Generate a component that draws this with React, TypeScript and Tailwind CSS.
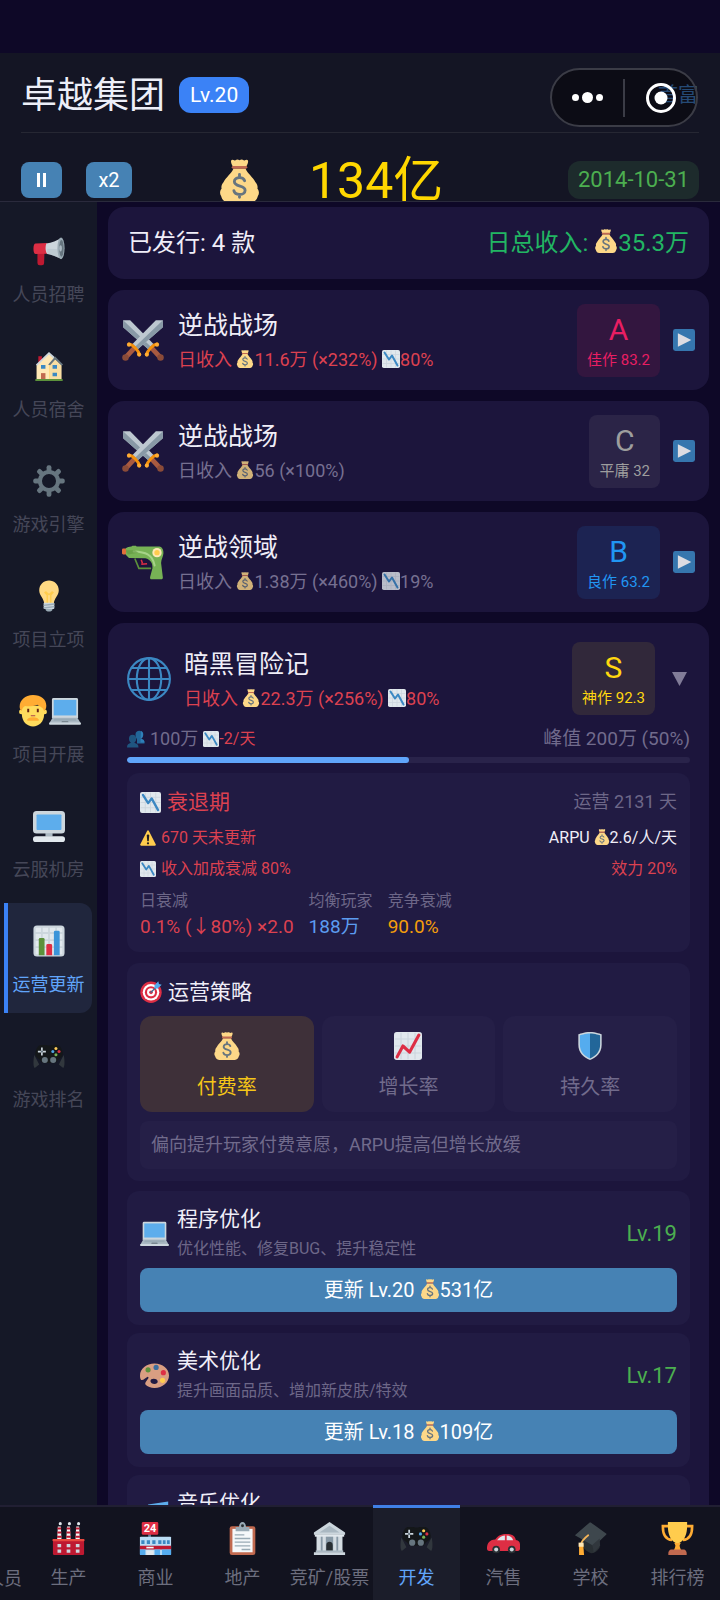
import React from "react";
import clsx from "clsx";

interface IconProps {
  className?: string;
}

interface SvgProps extends IconProps {
  children: React.ReactNode;
}

function Svg({ className, children }: SvgProps) {
  return (
    <svg viewBox="0 0 36 36" aria-hidden="true" className={clsx("shrink-0", className)}>
      {children}
    </svg>
  );
}

function MoneyBag({ className }: IconProps) {
  return (
    <Svg className={className}>
      <path fill="#FDD888" d="M11 1.200c1.200-1.400 2.400.5 3.600-.2 1.100-.8 2.200-.8 3.400 0 1.200-.8 2.400-.8 3.500 0 1.200.7 2.400-1.200 3.600.2.5 1.800-.9 3.800-1.800 5.800H12.800C11.900 5 10.500 3 11 1.200z" />
      <path fill="#FDD888" d="M13 8h10c2 4.500 6 7 8.400 11.500 1.600 2 2 3.500 1.600 5.500 1.500 1.500 1.700 4.500.4 6C32.600 34 31 36 28 36H8c-3 0-4.600-2-5.400-5-1.300-1.500-1.100-4.500.4-6-.4-2 0-3.500 1.600-5.500C7 15 11 12.500 13 8z" />
      <rect x="11.5" y="5.8" width="13" height="2.4" rx="1.2" fill="#BF6952" />
      <path fill="none" stroke="#67757F" strokeWidth="2.4" strokeLinecap="round" d="M22.300 18.200c-.6-1.700-2.200-2.600-4.200-2.600-2.500 0-4.400 1.200-4.400 3.300 0 5 9 2.700 9 7.200 0 2.300-2.100 3.600-4.600 3.600-2.400 0-4.300-1.100-4.800-3.200M18 13v2.500M18 30v2" />
    </Svg>
  );
}

function ChartGrid() {
  return (
    <>
      <rect width="36" height="36" rx="3.5" fill="#E1E8ED" />
      <path stroke="#CCD6DD" strokeWidth="1.5" d="M1 9h34M1 18h34M1 27h34M9 1v34M18 1v34M27 1v34" />
    </>
  );
}

function ChartDown({ className }: IconProps) {
  return (
    <Svg className={className}>
      <ChartGrid />
      <path fill="none" stroke="#3B88C3" strokeWidth="4" strokeLinecap="round" strokeLinejoin="round" d="M5 5l9 14 6-8 11 20" />
    </Svg>
  );
}

function ChartUp({ className }: IconProps) {
  return (
    <Svg className={className}>
      <ChartGrid />
      <path fill="none" stroke="#DD2E44" strokeWidth="4" strokeLinecap="round" strokeLinejoin="round" d="M4 32l7.500-14 8.500 8L32 4" />
    </Svg>
  );
}

function BarChart({ className }: IconProps) {
  return (
    <Svg className={className}>
      <rect x=".5" y=".5" width="35" height="35" rx="4" fill="#CCD6DD" />
      <path fill="#E1E8ED" d="M3 3h6v5H3zM11 3h6v5h-6zM19 3h6v5h-6zM27 3h6v5h-6zM3 10h6v6H3zM11 10h6v6h-6zM19 10h6v6h-6zM27 10h6v6h-6zM3 18h6v6H3zM11 18h6v6h-6zM19 18h6v6h-6zM27 18h6v6h-6zM3 26h6v7H3zM11 26h6v7h-6zM19 26h6v7h-6zM27 26h6v7h-6z" />
      <path fill="#5C913B" d="M6.500 34V16a1.500 1.500 0 0 1 1.500-1.500h3.500A1.500 1.500 0 0 1 13 16v18z" />
      <path fill="#DD2E44" d="M15 34V23a1.500 1.500 0 0 1 1.500-1.500H20a1.500 1.500 0 0 1 1.500 1.500v11z" />
      <path fill="#3B94D9" d="M23.500 34V8A1.500 1.500 0 0 1 25 6.500h3.500A1.500 1.500 0 0 1 30 8v26z" />
    </Svg>
  );
}

function Megaphone({ className }: IconProps) {
  return (
    <Svg className={className}>
      <path fill="#BE1931" d="M5 16h8l-.5 15.500A2.500 2.500 0 0 1 10 34H7.500A2.500 2.500 0 0 1 5 31.500z" />
      <path fill="#DD2E44" d="M3 9.500L16 9v12L3 21.500c-1.500 0-2.500-2-2.500-6s1-6 2.500-6z" />
      <path fill="#CCD6DD" d="M15 9.500C21 9 27 6 32 3v24c-5-2-11-5-16-5.500-2-3-2.500-8-1-12z" />
      <path fill="#AAB8C2" d="M16 15.500l16 .5v11c-5-2-11-5-16-5.500z" opacity=".4" />
      <ellipse cx="31.5" cy="15" rx="4" ry="12.3" fill="#9AAAB4" />
      <ellipse cx="32" cy="15" rx="2.5" ry="9.5" fill="#66757F" />
      <ellipse cx="31" cy="15" rx="1.5" ry="3.5" fill="#AAB8C2" />
    </Svg>
  );
}

function House({ className }: IconProps) {
  return (
    <Svg className={className}>
      <rect x="6" y="7" width="4" height="8" fill="#BE1931" />
      <path fill="#FFE8B6" d="M4 17L18 4l14 13v16H4z" />
      <path fill="#F3D48F" d="M18 17l6-8 8 8v16H18z" opacity=".5" />
      <path fill="none" stroke="#CCD6DD" strokeWidth="2" d="M4 17L18 3.500 24 9" />
      <path fill="none" stroke="#66757F" strokeWidth="2.2" d="M18 17l7-8 8 8" />
      <path fill="#FFD983" d="M18 17h1v16h-1z" />
      <path fill="#3B88C3" d="M9 17h5v4H9zM22 17h5v4h-5zM22 25.500h5v4h-5z" />
      <path fill="#C1694F" d="M9 26h5v7H9z" />
      <rect x="2.5" y="32.5" width="31" height="2.5" rx="1" fill="#5C913B" />
    </Svg>
  );
}

function Gear({ className }: IconProps) {
  return (
    <Svg className={className}>
      <g fill="#66757F">
        {[0, 45, 90, 135, 180, 225, 270, 315].map((angle) => (
          <rect key={angle} x="15.3" y=".3" width="5.4" height="8" rx="2.2" transform={`rotate(${angle} 18 18)`} />
        ))}
      </g>
      <circle cx="18" cy="18" r="10.2" fill="none" stroke="#66757F" strokeWidth="4.6" />
    </Svg>
  );
}

function Bulb({ className }: IconProps) {
  return (
    <Svg className={className}>
      <path fill="#FFD983" d="M29 11.500C29 5 24 .5 18 .5S7 5 7 11.500c0 6 5.500 9.500 5.500 15h11c0-5.500 5.500-9 5.500-15z" />
      <path fill="none" stroke="#FFCC4D" strokeWidth="1.6" d="M16 26V17l-3-3.500M20 26V17l3-3.500M14 13l4 3.500 4-3.500" />
      <rect x="12" y="25.5" width="12" height="7" rx="1" fill="#CCD6DD" />
      <path stroke="#99AAB5" strokeWidth="1.5" d="M12 28.500l12-1.500M12 31.500l12-1.500" />
      <path fill="#99AAB5" d="M14 32.500h8c0 2-2 3-4 3s-4-1-4-3z" />
    </Svg>
  );
}

function Man({ className }: IconProps) {
  return (
    <Svg className={className}>
      <circle cx="5" cy="19" r="2.7" fill="#FFDC5D" />
      <circle cx="31" cy="19" r="2.7" fill="#FFDC5D" />
      <path fill="#FFDC5D" d="M5.500 12h25v10c0 8-6 13.500-12.500 13.500S5.500 30 5.500 22z" />
      <path fill="#FFAC33" d="M18 0C9 0 3 6 3 13c0 2 .5 4 2 5 1-2 1.500-4 4-5.500 5 .5 10 0 14-1.500 1 2 6 2 7.500 7C32 17 33 15 33 12 33 5 27 0 18 0z" />
      <path fill="#662113" d="M11.500 15.500h2.200v3.800h-2.200zM22.300 15.500h2.200v3.800h-2.200z" />
      <path fill="#C1694F" d="M15.500 22.500h5v1.500h-5z" />
      <path fill="#FFAC33" d="M18 25c4 0 6 1 7 3.500-2 .8-4 .5-7 .5s-5 .3-7-.5C12 26 14 25 18 25z" />
    </Svg>
  );
}

function Laptop({ className }: IconProps) {
  return (
    <Svg className={className}>
      <path fill="#CCD6DD" d="M5 3.500h26A1.700 1.700 0 0 1 32.700 5v21H3.300V5A1.700 1.700 0 0 1 5 3.500z" />
      <path fill="#5DADEC" d="M5.300 5.500h25.400V23H5.300z" />
      <path fill="#AAB8C2" d="M4 25.500h28l3.500 6H.5z" />
      <path fill="#99AAB5" d="M6 26.500h24l1 2.500H5z" />
      <path fill="#78868F" d="M14.500 29.300h7l.5 1.700h-8z" />
      <rect x="0" y="31" width="36" height="2.5" rx="1.2" fill="#CCD6DD" />
    </Svg>
  );
}

function Desktop({ className }: IconProps) {
  return (
    <Svg className={className}>
      <path fill="#AAB8C2" d="M14 26h8v4h-8z" />
      <rect x="0" y="1" width="36" height="25.5" rx="4" fill="#CCD6DD" />
      <rect x="4" y="5" width="28" height="17.5" rx="1" fill="#5DADEC" />
      <rect x="0" y="29.5" width="36" height="6.5" rx="3.2" fill="#E1E8ED" />
    </Svg>
  );
}

function Gamepad({ className }: IconProps) {
  return (
    <Svg className={className}>
      <path fill="#31373D" d="M1.500 17L7 27.500 2 31.500C0 30 .3 22 1.500 17zM34.500 17L29 27.500l5 4c2-1.500 1.700-9.500.5-14.500z" />
      <path fill="#141719" d="M8 5.500h7c1.500.8 4.500.8 6 0h7c3 1.500 5 5 5.500 9.500.3 3-2 5.500-5 7l-3 3.500H10.500l-3-3.500c-3-1.500-5.300-4-5-7C3 10.500 5 7 8 5.500z" />
      <path stroke="#CCD6DD" strokeWidth="1.9" d="M10 8.500v9M5.500 13h9" />
      <circle cx="10" cy="13" r="1.3" fill="#66757F" />
      <circle cx="13.3" cy="22.5" r="3.4" fill="#66757F" />
      <circle cx="22.7" cy="22.5" r="3.4" fill="#66757F" />
      <circle cx="25.8" cy="9.5" r="1.7" fill="#FDCB58" />
      <circle cx="25.8" cy="16.5" r="1.7" fill="#77B255" />
      <circle cx="22.3" cy="13" r="1.7" fill="#50A5E6" />
      <circle cx="29.3" cy="13" r="1.7" fill="#DD2E44" />
    </Svg>
  );
}

function Sword() {
  return (
    <>
      <path fill="#BDC8D0" d="M1 1h6l20 20.500-4.500 4.500L1 7z" />
      <path fill="#8899A6" d="M1 1l24 23-2.500 2L1 7z" />
      <path stroke="#A85A40" strokeWidth="4.2" d="M25.500 25l6.500 7" />
      <path stroke="#F4900C" strokeWidth="2.6" strokeLinecap="round" d="M21 30.500c1-3.500 5.500-8.500 9-9" fill="none" />
      <circle cx="30" cy="22" r="1.8" fill="#FFAC33" />
      <circle cx="21.3" cy="30.5" r="1.8" fill="#FFAC33" />
      <circle cx="33" cy="33" r="2.8" fill="#8A4B38" />
    </>
  );
}

function Swords({ className }: IconProps) {
  return (
    <Svg className={className}>
      <Sword />
      <g transform="matrix(-1 0 0 1 36 0)">
        <Sword />
      </g>
    </Svg>
  );
}

function WaterGun({ className }: IconProps) {
  return (
    <Svg className={className}>
      <path fill="none" stroke="#5C913B" strokeWidth="1.4" d="M11 15l3.500 8.500H25" />
      <path fill="none" stroke="#DD2E44" strokeWidth="1.3" d="M16.500 16l1 3M16.500 20l5-.5" />
      <path fill="#77B255" d="M3 6.500C5 5 6 5 8 4.800L9 4h3l.5.800H32c2.500.5 3.800 3 3.500 6-.2 3-1.800 4.500-2 8L35 31c.2 1.200-.5 1.800-1.500 1.800h-8c-1.200 0-1.700-.8-1.400-2l2-7.500c.3-4-1.500-7.500-6.100-8.500L6 14.500 3 11.500z" />
      <path fill="none" stroke="#A6D388" strokeWidth="1.7" strokeLinecap="round" d="M10 9c10 .5 16 2 18 12" />
      <path fill="#5C913B" d="M3 8h8l3 2-9 1.500z" opacity=".5" />
      <rect x="0" y="6.5" width="3.5" height="5" rx="1" fill="#E0703A" />
      <circle cx="30" cy="10" r="4" fill="#FFE8B6" />
      <circle cx="30" cy="10" r="2.3" fill="#FFCC4D" />
    </Svg>
  );
}

function Globe({ className }: IconProps) {
  return (
    <Svg className={className}>
      <g fill="none" stroke="#3B88C3" strokeWidth="1.7">
        <circle cx="18" cy="18" r="17.1" />
        <ellipse cx="18" cy="18" rx="10" ry="17.1" />
        <path d="M18 1v34M1 18h34M4 9h28M4 27h28" />
      </g>
    </Svg>
  );
}

function People({ className }: IconProps) {
  return (
    <Svg className={className}>
      <path fill="#226699" d="M35 25c0-5-4-6-8-7 2-1 4-4 4-9 0-5-2.500-7.500-6.500-7.500S17 4 17 9c0 5 1 7 3 9v9h15z" />
      <path fill="#2F7FB9" d="M28 1.800c3 .8 4.500 3.200 4.500 7.200 0 4.500-1.800 7.500-4.500 8.600 4 1 7 2.400 7 7.400h-8z" />
      <path fill="#1F5580" d="M0 35c0-6 3-8 8-9.500C5 24 4 21 4 17c0-4.500 2.500-7.500 7-7.500s7.500 3 7.500 7.500c0 4-1.500 7-4 8.500C20 27 23 29 23 35z" />
    </Svg>
  );
}

function Warning({ className }: IconProps) {
  return (
    <Svg className={className}>
      <path fill="#FFCC4D" d="M2.700 35.500c-2 0-3-1.600-2-3.500L16.200 1.800c1-1.800 2.600-1.800 3.600 0L35.300 32c1 1.900 0 3.500-2 3.500z" />
      <path fill="#231F20" d="M15.200 12.500c0-3.500 5.600-3.500 5.600 0l-1 11.500c-.2 2-3.400 2-3.600 0z" />
      <circle cx="18" cy="30" r="2.6" fill="#231F20" />
    </Svg>
  );
}

function Target({ className }: IconProps) {
  return (
    <Svg className={className}>
      <circle cx="18" cy="18.5" r="17.5" fill="#DD2E44" />
      <circle cx="18" cy="18.5" r="13.5" fill="#fff" />
      <circle cx="18" cy="18.5" r="10" fill="#DD2E44" />
      <circle cx="18" cy="18.5" r="6.5" fill="#fff" />
      <circle cx="18" cy="18.5" r="3" fill="#DD2E44" />
      <path stroke="#3B6F96" strokeWidth="2" strokeLinecap="round" d="M18 18.500L28 8.500" />
      <path fill="#55ACEE" d="M23.500 7.500L30 .5l1 4.500 4.500 1-7 6.500-4.500-.5z" />
    </Svg>
  );
}

function Shield({ className }: IconProps) {
  return (
    <Svg className={className}>
      <path fill="#CCD6DD" d="M33 3s-7.500-3-15-3S3 3 3 3v13c0 11 7 17 15 20 8-3 15-9 15-20z" />
      <path fill="#55ACEE" d="M18 2c-6 0-13 2.300-13 2.300V16c0 9.500 6 15 13 18z" />
      <path fill="#226699" d="M18 2c6 0 13 2.300 13 2.300V16c0 9.500-6 15-13 18z" />
    </Svg>
  );
}

function Palette({ className }: IconProps) {
  return (
    <Svg className={className}>
      <path fill="#D99E82" fillRule="evenodd" d="M18 3C8 3 0 9.500 0 18c0 2.500.5 5 1.500 5.500 2.500 1 5-2.500 8-4 1 0 1.500 1 .5 2.500-2 3-4.500 5-3 7.500C9 32 13.500 33.500 18 33.500c10 0 18-7 18-15.500S28 3 18 3zm-1 19c3 0 5 1.500 5 3.500S20.500 28.500 18 28.500 13 27 13 25s1.500-3 4-3z" />
      <circle cx="10" cy="11" r="3.2" fill="#5C913B" />
      <circle cx="20" cy="8" r="3.2" fill="#3B6FA0" />
      <circle cx="29" cy="14.5" r="3.2" fill="#DD2E44" />
      <circle cx="28" cy="24" r="3.2" fill="#FFCC4D" />
    </Svg>
  );
}

function MusicNote({ className }: IconProps) {
  return (
    <Svg className={clsx("overflow-visible", className)}>
      <path fill="#5DADEC" d="M35-2v26c0 4-3 6-6 6s-5-1.500-5-4 2.500-5 7-5V8.500l-17 3V30c0 4-3 6-6 6s-5-1.500-5-4 2.500-5 7-5V2z" />
    </Svg>
  );
}

function Factory({ className }: IconProps) {
  return (
    <Svg className={className}>
      {[8, 18, 28].map((x) => (
        <g key={x}>
          <path fill="#F5F8FA" d={`M${x - 1.6} 5h3.200L${x + 2.4} 20h-4.800z`} />
          <path stroke="#BE1931" strokeWidth="2.2" d={`M${x - 2} 7h4M${x - 2.2} 11.500h4.400M${x - 2.5} 16h5`} />
          <circle cx={x + 1} cy="1.8" r="1.7" fill="#E1E8ED" />
        </g>
      ))}
      <path fill="#BE1931" d="M1 19h34v15.500a1.500 1.500 0 0 1-1.500 1.500h-31A1.500 1.500 0 0 1 1 34.500z" />
      <rect x=".5" y="18.5" width="35" height="2.5" rx="1" fill="#E8483F" />
      <path fill="#CCD6DD" d="M6 24h4v3.500H6zM16 24h4v3.500h-4zM26 24h4v3.500h-4zM6 30h4v3.500H6zM16 30h4v3.500h-4zM26 30h4v3.500h-4z" />
    </Svg>
  );
}

function Store({ className }: IconProps) {
  return (
    <Svg className={className}>
      <path fill="#5C7F99" d="M10 13h3v4h-3z" />
      <rect x="3" y="0" width="18" height="14" rx="1.5" fill="#DD2E44" />
      <text x="12" y="11.3" fontSize="12" fontWeight="700" fill="#fff" textAnchor="middle">24</text>
      <rect x="1" y="16" width="34" height="20" rx="1" fill="#BBDDF5" />
      <path fill="#3B88C3" d="M2.500 20H6v4H2.500zM8.500 20H12v4H8.500zM14.500 20H18v4h-3.500zM21 20h3.500v4H21zM26 20h3v4h-3zM30.500 20h3v4h-3z" />
      <path fill="#BE1931" d="M1 26h34v4H1z" />
      <path fill="#F5F8FA" d="M8 27h8v1.800H8z" />
      <path fill="#55ACEE" d="M1 30h6v6H1zM17 30h6v6h-6zM25 30h10v6H25z" />
      <path fill="#E1E8ED" d="M8 31h8v5H8z" />
    </Svg>
  );
}

function Clipboard({ className }: IconProps) {
  return (
    <Svg className={className}>
      <rect x="4" y="4.5" width="28" height="31.5" rx="2.5" fill="#C1694F" />
      <path fill="#F5F8FA" d="M7 7.500h22V33H7z" />
      <path fill="#99AAB5" d="M10.500 5.500h3.700C14.200 2.500 15.500 0 18 0s3.800 2.500 3.800 5.500h3.700V10h-15z" />
      <circle cx="18" cy="4" r="1.6" fill="#292F33" />
      <path stroke="#99AAB5" strokeWidth="1.5" d="M9.500 14H20M9.500 18h17M9.500 22h17M9.500 26h17M17 30h9.500" />
    </Svg>
  );
}

function Bank({ className }: IconProps) {
  return (
    <Svg className={className}>
      <path fill="#CCD6DD" d="M18 0l17 11.500V14H1v-2.500z" />
      <path fill="#AAB8C2" d="M18 4l11 7.500H7z" />
      <path fill="#8899A6" d="M4 15h28v17H4z" />
      <path fill="#D5DDE3" d="M4 15h4.500v17H4zM10.500 15H14v17h-3.500zM22 15h3.500v17H22zM27.500 15H32v17h-4.500z" />
      <path fill="#292F33" d="M14.500 32v-7c0-4.500 7-4.500 7 0v7z" />
      <path fill="#AAB8C2" d="M3 31h30v2.500H3z" />
      <path fill="#CCD6DD" d="M1 33h34v3H1z" />
      <path fill="#E1E8ED" d="M2 13.500h32V16H2z" />
    </Svg>
  );
}

function Car({ className }: IconProps) {
  return (
    <Svg className={className}>
      <path fill="#DD2E44" d="M9 19c3-3.500 5-6 12-6 7.500 0 9.500 3 10.500 6.500 3 .5 4.500 2 4.500 5V29c0 1.500-.8 2.500-2.500 2.500H2.500C.8 31.500 0 30.500 0 29c0-6 2.500-9.500 9-10z" />
      <path fill="#E1E8ED" d="M11 20c2-3 4.500-5 8.500-5.200V20zM21.500 14.800c4 .2 6 1.700 7 5.200h-7z" />
      <circle cx="10" cy="30" r="4.2" fill="#292F33" />
      <circle cx="27" cy="30" r="4.2" fill="#292F33" />
      <circle cx="10" cy="30" r="2.2" fill="#CCD6DD" />
      <circle cx="27" cy="30" r="2.2" fill="#CCD6DD" />
    </Svg>
  );
}

function GraduationCap({ className }: IconProps) {
  return (
    <Svg className={className}>
      <path fill="#292F33" d="M9 15l18 5 1 8c-3 4-6 6-9.500 6C15 33 11 30 9 26z" />
      <path fill="#3E474D" d="M1 14.500L16.500 1c.8-.6 1.700-.6 2.500 0L35 12.500c.6.500.6 1 0 1.500L22 26.500z" />
      <path fill="#31373D" d="M20 25l8-7 .5 8-7 7.500z" />
      <path fill="none" stroke="#F4B459" strokeWidth="2" strokeLinecap="round" d="M15.500 14.500C11 18 8 20.500 7.500 25" />
      <path fill="#FFAC33" d="M5.500 24h4.500l1 12H5.500z" />
      <path fill="#FFE8B6" d="M5 22.500h5.500V27H5z" />
    </Svg>
  );
}

function Trophy({ className }: IconProps) {
  return (
    <Svg className={className}>
      <path fill="none" stroke="#FFAC33" strokeWidth="2.8" d="M9 4.500H2c0 8 2.500 14.500 10 15M27 4.500h7c0 8-2.500 14.500-10 15" />
      <path fill="#FFCC4D" d="M7.500 0h21v4c0 9-2.500 15.500-8.500 19v6h-4v-6C10 19.500 7.500 13 7.500 4z" />
      <path fill="#FFAC33" d="M14.500 23h7l-1.500 3 2 5h-8l2-5z" />
      <path fill="#C1694F" d="M11 30h14c1.500 0 2.500 1.500 3 3.500V36H8v-2.500c.5-2 1.500-3.500 3-3.500z" />
    </Svg>
  );
}

function PlayIcon({ className }: IconProps) {
  return (
    <Svg className={className}>
      <rect width="36" height="36" rx="4" fill="#3B88C3" />
      <path fill="#fff" d="M8 7l22 11L8 29z" />
    </Svg>
  );
}

const sideItems = [
  { label: "人员招聘", icons: [Megaphone] },
  { label: "人员宿舍", icons: [House] },
  { label: "游戏引擎", icons: [Gear] },
  { label: "项目立项", icons: [Bulb] },
  { label: "项目开展", icons: [Man, Laptop] },
  { label: "云服机房", icons: [Desktop] },
  { label: "运营更新", icons: [BarChart], active: true },
  { label: "游戏排名", icons: [Gamepad] },
];

const navItems = [
  { label: "生产", icon: Factory },
  { label: "商业", icon: Store },
  { label: "地产", icon: Clipboard },
  { label: "竞矿/股票", icon: Bank },
  { label: "开发", icon: Gamepad, active: true },
  { label: "汽售", icon: Car },
  { label: "学校", icon: GraduationCap },
  { label: "排行榜", icon: Trophy },
];

const gradeStyles = {
  S: "bg-[#31283a] text-[#ffd70f]",
  A: "bg-[#33163f] text-[#e91e63]",
  B: "bg-[#1c2352] text-[#2196f3]",
  C: "bg-[#2b2447] text-[#9e9e9e]",
};

type Grade = keyof typeof gradeStyles;

interface Game {
  name: string;
  icon: (props: IconProps) => React.JSX.Element;
  income: string;
  ratio: string;
  decay?: string;
  declining?: boolean;
  grade: Grade;
  verdict: string;
}

const games: Game[] = [
  { name: "逆战战场", icon: Swords, income: "11.6万", ratio: "(×232%)", decay: "80%", declining: true, grade: "A", verdict: "佳作 83.2" },
  { name: "逆战战场", icon: Swords, income: "56", ratio: "(×100%)", grade: "C", verdict: "平庸 32" },
  { name: "逆战领域", icon: WaterGun, income: "1.38万", ratio: "(×460%)", decay: "19%", grade: "B", verdict: "良作 63.2" },
];

const openGame: Game = {
  name: "暗黑冒险记", icon: Globe, income: "22.3万", ratio: "(×256%)", decay: "80%", declining: true, grade: "S", verdict: "神作 92.3",
};

const strategies = [
  { label: "付费率", icon: MoneyBag, active: true },
  { label: "增长率", icon: ChartUp },
  { label: "持久率", icon: Shield },
];

const upgrades = [
  { name: "程序优化", desc: "优化性能、修复BUG、提升稳定性", icon: Laptop, level: "Lv.19", next: "Lv.20", cost: "531亿" },
  { name: "美术优化", desc: "提升画面品质、增加新皮肤/特效", icon: Palette, level: "Lv.17", next: "Lv.18", cost: "109亿" },
  { name: "音乐优化", desc: "提升音乐音效", icon: MusicNote, level: "Lv.17", next: "Lv.18", cost: "109亿" },
];

const inlineIcon = "inline-block size-[1em] align-[-2px]";

function GameTitle({ game }: { game: Game }) {
  return (
    <div className="min-w-0 flex-1 pt-1">
      <h2 className="text-[25px] leading-8 text-[#f0eef8]">{game.name}</h2>
      <p className={clsx("mt-1 text-lg leading-7", game.declining ? "text-[#dc4150]" : "text-[#767091]")}>
        日收入 <MoneyBag className={clsx(inlineIcon, !game.declining && "opacity-80")} />
        {game.income} {game.ratio}
        {game.decay && (
          <>
            {" "}
            <ChartDown className={clsx(inlineIcon, !game.declining && "opacity-80")} />
            {game.decay}
          </>
        )}
      </p>
    </div>
  );
}

function GradeBadge({ game }: { game: Game }) {
  return (
    <div className={clsx("flex h-[73px] flex-col items-center justify-center rounded-lg px-[10px] pt-[3px]", gradeStyles[game.grade])}>
      <span className="text-[30px] leading-9">{game.grade}</span>
      <span className="text-[15px] leading-6">{game.verdict}</span>
    </div>
  );
}

function GameCard({ game }: { game: Game }) {
  const Icon = game.icon;
  return (
    <section className="flex h-[100px] shrink-0 items-center rounded-2xl bg-[#1c153c] px-[14px]">
      <Icon className="mr-[14px] size-[42px]" />
      <GameTitle game={game} />
      <GradeBadge game={game} />
      <button type="button" aria-label="展开" className="ml-[13px]">
        <PlayIcon className="size-[22px] opacity-85" />
      </button>
    </section>
  );
}

function Header() {
  return (
    <header className="relative h-[149px] shrink-0 overflow-hidden border-b border-[#2a2a3c] bg-[#141524] px-[21px]">
      <div className="flex h-20 items-center border-b border-[#262733] pt-1">
        <h1 className="pt-0.5 text-4xl text-[#edeff8]">卓越集团</h1>
        <span className="ml-[14px] rounded-xl bg-[#3b82f6] px-[11px] py-1 text-[21px] leading-7 text-white">Lv.20</span>
        <a href="#rich" className="mr-px ml-auto text-xl text-[#3f7cc4]">首富</a>
      </div>
      {/* host app capsule, floats over the page header */}
      <div className="absolute top-[15px] right-[22px] flex h-[59px] w-[148px] items-center rounded-full border-2 border-[#3b3c46] bg-black/40">
        <button type="button" aria-label="更多" className="flex flex-1 items-center justify-center gap-[3px]">
          <span className="size-[7px] rounded-full bg-white" />
          <span className="size-[11px] rounded-full bg-white" />
          <span className="size-[7px] rounded-full bg-white" />
        </button>
        <span className="h-[38px] w-0.5 bg-[#3b3c46]" />
        <button type="button" aria-label="关闭" className="flex flex-1 justify-center">
          <svg viewBox="0 0 32 32" className="size-8">
            <circle cx="16" cy="16" r="13.5" fill="none" stroke="#fff" strokeWidth="3" />
            <circle cx="16" cy="16" r="6.5" fill="#fff" />
          </svg>
        </button>
      </div>
      <div className="flex items-center pt-[23px]">
        <button type="button" aria-label="暂停" className="flex h-9 w-[41px] items-center justify-center gap-[3px] rounded-lg bg-[#4682b4]">
          <span className="h-[14px] w-[3px] bg-white" />
          <span className="h-[14px] w-[3px] bg-white" />
        </button>
        <button type="button" className="ml-6 h-9 w-[46px] rounded-lg bg-[#4682b4] text-xl text-white">x2</button>
        <div className="flex flex-1 items-center gap-12 pl-[86px] text-[50px] leading-[46px] text-[#ffd700]">
          <MoneyBag className="size-[43px]" />
          <span className="pt-0.5">134亿</span>
        </div>
        <time className="rounded-xl bg-[#1d2b2c] px-[10px] py-[5px] text-[22px] leading-7 text-[#4caf50]">2014-10-31</time>
      </div>
    </header>
  );
}

function Sidebar() {
  return (
    <aside className="flex w-[97px] shrink-0 flex-col gap-[5px] bg-[#151827] pt-[11px] pr-[5px] pl-1">
      {sideItems.map(({ label, icons, active }) => (
        <button
          key={label}
          type="button"
          className={clsx(
            "flex h-[110px] shrink-0 flex-col items-center gap-4 rounded-r-xl border-l-4 pt-[22px] pr-[3px] text-lg leading-6",
            active ? "border-[#3b82f6] bg-[#20263d] text-[#60a5fa]" : "border-transparent text-[#454758]"
          )}
        >
          <span className="flex">
            {icons.map((Icon, index) => (
              <Icon key={index} className="size-8" />
            ))}
          </span>
          {label}
        </button>
      ))}
    </aside>
  );
}

function LifecyclePanel() {
  return (
    <div className="mt-[10px] rounded-xl bg-[#211b43] px-[13px] pt-[13px] pb-[11px] text-base leading-6 text-[#dc4150]">
      <div className="flex items-center justify-between">
        <span className="flex items-center gap-[6px] text-[21px] leading-8">
          <ChartDown className="size-[21px]" />
          衰退期
        </span>
        <span className="text-lg text-[#6d6788]">运营 2131 天</span>
      </div>
      <div className="mt-2 flex items-center justify-between">
        <span className="flex items-center gap-[5px]"><Warning className="size-4" />670 天未更新</span>
        <span className="text-[#f0eef8]">ARPU <MoneyBag className={inlineIcon} />2.6/人/天</span>
      </div>
      <div className="mt-[7px] flex items-center justify-between">
        <span className="flex items-center gap-[5px]"><ChartDown className="size-4" />收入加成衰减 80%</span>
        <span>效力 20%</span>
      </div>
      <dl className="mt-2 flex gap-[15px]">
        <div>
          <dt className="text-[#6d6788]">日衰减</dt>
          <dd className="text-[19px] leading-7">0.1% (↓80%) ×2.0</dd>
        </div>
        <div>
          <dt className="text-[#6d6788]">均衡玩家</dt>
          <dd className="text-[19px] leading-7 text-[#5c9cf0]">188万</dd>
        </div>
        <div>
          <dt className="text-[#6d6788]">竞争衰减</dt>
          <dd className="text-[19px] leading-7 text-[#f59e0b]">90.0%</dd>
        </div>
      </dl>
    </div>
  );
}

function StrategyPanel() {
  return (
    <div className="mt-[11px] rounded-xl bg-[#211b43] px-[13px] pt-[13px] pb-3">
      <h3 className="flex items-center gap-[6px] text-[21px] leading-8 text-[#f0eef8]">
        <Target className="size-[22px]" />
        运营策略
      </h3>
      <div className="mt-2 grid grid-cols-3 gap-2">
        {strategies.map(({ label, icon: Icon, active }) => (
          <button
            key={label}
            type="button"
            className={clsx(
              "flex h-24 flex-col items-center rounded-xl pt-4 text-xl leading-7",
              active ? "bg-[#3e3039] text-[#f5c518]" : "bg-[#251f47] text-[#716b8c]"
            )}
          >
            <Icon className="mb-[13px] size-7" />
            {label}
          </button>
        ))}
      </div>
      <p className="mt-[9px] rounded-lg bg-[#251f47] px-[11px] py-[10px] text-lg leading-7 text-[#716b8c]">
        偏向提升玩家付费意愿，ARPU提高但增长放缓
      </p>
    </div>
  );
}

function OpenGameCard() {
  const [percent] = React.useState(50);
  return (
    <section className="shrink-0 rounded-2xl bg-[#1c153c] px-[19px] pt-[19px] pb-5">
      <div className="flex items-center">
        <Globe className="mr-[13px] size-11" />
        <GameTitle game={openGame} />
        <GradeBadge game={openGame} />
        <button type="button" aria-label="收起" className="mr-[3px] ml-[17px]">
          <svg viewBox="0 0 15 14" className="h-[14px] w-[15px]">
            <path fill="#817c98" d="M0 0h15L7.500 14z" />
          </svg>
        </button>
      </div>
      <div className="mt-[10px] flex items-center text-[#716b8c] leading-7">
        <People className="size-[18px]" />
        <span className="ml-[5px] text-lg leading-7">100万</span>
        <span className="ml-[5px] flex items-center text-base leading-7 text-[#dc4150]"><ChartDown className="size-4" />-2/天</span>
        <span className="ml-auto text-[19px] leading-7">峰值 200万 (50%)</span>
      </div>
      <div className="mt-1 h-[6px] overflow-hidden rounded-full bg-[#29234a]">
        <div className="h-full rounded-full bg-[#60a5fa]" style={{ width: `${percent}%` }} />
      </div>
      <LifecyclePanel />
      <StrategyPanel />
      <ul className="mt-[10px] flex flex-col gap-2">
        {upgrades.map(({ name, desc, icon: Icon, level, next, cost }) => (
          <li key={name} className="h-[134px] rounded-xl bg-[#211b43] px-[13px] pt-3">
            <div className="flex items-center">
              <Icon className="mr-2 size-[29px]" />
              <div className="flex-1">
                <h3 className="text-[21px] leading-8 text-[#f0eef8]">{name}</h3>
                <p className="text-base leading-7 text-[#6d6788]">{desc}</p>
              </div>
              <span className="text-[22px] text-[#4caf50]">{level}</span>
            </div>
            <button type="button" className="mt-[5px] h-11 w-full rounded-lg bg-[#4682b4] text-xl text-white">
              更新 {next} <MoneyBag className={inlineIcon} />{cost}
            </button>
          </li>
        ))}
      </ul>
    </section>
  );
}

function BottomNav() {
  return (
    <nav className="flex h-[95px] shrink-0 justify-end overflow-hidden bg-[#12131f] text-lg leading-6 text-[#6c6e7e]">
      <a href="#staff" className="w-[87px] shrink-0 border-t-2 border-[#211f33] pt-[60px] pr-[3px] text-right">人员</a>
      {navItems.map(({ label, icon: Icon, active }) => (
        <a
          key={label}
          href={`#${label}`}
          className={clsx(
            "flex w-[87px] shrink-0 flex-col items-center whitespace-nowrap last:-mr-px",
            active
              ? "border-t-[3px] border-[#4080e6] bg-[#1b1d2a] pt-[14px] text-[#60a5fa]"
              : "border-t-2 border-[#211f33] pt-[15px]"
          )}
        >
          <Icon className="mb-[11px] size-[33px]" />
          {label}
        </a>
      ))}
    </nav>
  );
}

export default function App() {
  return (
    <div
      lang="zh-CN"
      className="flex h-screen flex-col overflow-hidden bg-[#0e0827] [font-family:Roboto,'Noto_Sans_CJK_SC',sans-serif]"
    >
      <div className="h-[53px] shrink-0" />
      <Header />
      <div className="flex min-h-0 flex-1 overflow-hidden">
        <Sidebar />
        <main className="flex min-w-0 flex-1 flex-col gap-[11px] overflow-hidden px-[11px] pt-[5px]">
          <div className="flex h-[72px] shrink-0 items-center justify-between rounded-2xl bg-[#1c153c] px-5 text-2xl">
            <span className="text-[#f0eef8]">已发行: 4 款</span>
            <span className="text-[#22b563]">日总收入: <MoneyBag className={inlineIcon} />35.3万</span>
          </div>
          {games.map((game, index) => (
            <GameCard key={index} game={game} />
          ))}
          <OpenGameCard />
        </main>
      </div>
      <BottomNav />
    </div>
  );
}
